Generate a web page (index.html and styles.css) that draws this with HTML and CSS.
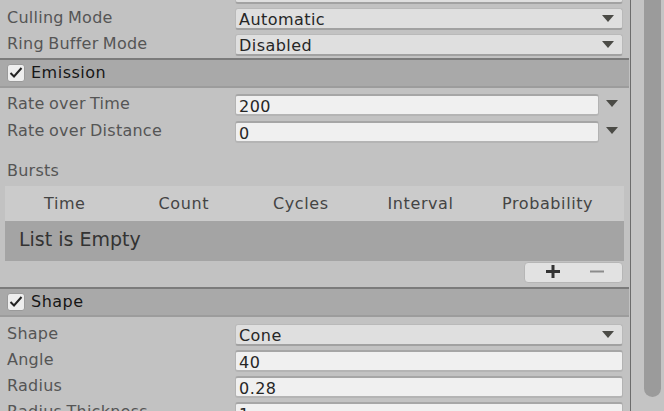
FILE: index.html
```html
<!DOCTYPE html>
<html>
<head>
<meta charset="utf-8">
<link rel="stylesheet" href="styles.css">
</head>
<body>
<div class="inspector">
  <div class="stub"></div>
  <div class="row">
    <div class="label">Culling Mode</div>
    <div class="dropdown"><span class="val">Automatic</span><span class="arrow"></span></div>
  </div>
  <div class="row">
    <div class="label">Ring Buffer Mode</div>
    <div class="dropdown"><span class="val">Disabled</span><span class="arrow"></span></div>
  </div>

  <div class="header">
    <span class="check"><svg width="18" height="18" viewBox="0 0 18 18"><polyline points="3.5,9 7,12.5 14.5,4" fill="none" stroke="#222" stroke-width="2"/></svg></span>
    <span class="htitle">Emission</span>
  </div>
  <div class="body emission">
    <div class="row trow">
      <div class="label">Rate over Time</div>
      <div class="field short"><span class="val">200</span></div>
      <span class="arrow ext"></span>
    </div>
    <div class="row trow">
      <div class="label">Rate over Distance</div>
      <div class="field short"><span class="val">0</span></div>
      <span class="arrow ext"></span>
    </div>
    <div class="row blabel">
      <div class="label">Bursts</div>
    </div>
    <div class="bursts">
      <div class="thead">
        <span>Time</span><span>Count</span><span>Cycles</span><span>Interval</span><span>Probability</span>
      </div>
      <div class="tempty">List is Empty</div>
      <div class="tfoot">
        <div class="btn">
          <svg width="97" height="19" viewBox="0 0 97 19"><path d="M21 8.5h14M28 2v13" stroke="#333" stroke-width="3"/><path d="M65 8.5h14" stroke="#8c8c8c" stroke-width="2"/></svg>
        </div>
      </div>
    </div>
  </div>

  <div class="header">
    <span class="check"><svg width="18" height="18" viewBox="0 0 18 18"><polyline points="3.5,9 7,12.5 14.5,4" fill="none" stroke="#222" stroke-width="2"/></svg></span>
    <span class="htitle">Shape</span>
  </div>
  <div class="body shape">
    <div class="row">
      <div class="label">Shape</div>
      <div class="dropdown"><span class="val">Cone</span><span class="arrow"></span></div>
    </div>
    <div class="row">
      <div class="label">Angle</div>
      <div class="field"><span class="val">40</span></div>
    </div>
    <div class="row">
      <div class="label">Radius</div>
      <div class="field"><span class="val">0.28</span></div>
    </div>
    <div class="row">
      <div class="label">Radius Thickness</div>
      <div class="field"><span class="val">1</span></div>
    </div>
  </div>
</div>
<div class="scroll"><div class="thumb"></div></div>
</body>
</html>
```
FILE: styles.css
```css
html, body {
  margin: 0;
  padding: 0;
}
body {
  width: 664px;
  height: 411px;
  overflow: hidden;
  display: flex;
  background: #c2c2c2;
  font-family: "DejaVu Sans", sans-serif;
  font-size: 16px;
}
.inspector {
  width: 630px;
  flex: none;
}
.scroll {
  width: 34px;
  flex: none;
  box-sizing: border-box;
  border-left: 1px solid #6c6c6c;
  background: #c4c4c4;
  padding-left: 13px;
}
.thumb {
  width: 17px;
  height: 397px;
  background: #9b9b9b;
  border-radius: 0 0 9px 9px;
}
.stub {
  margin-left: 235px;
  width: 388px;
  height: 4px;
  box-sizing: border-box;
  background: #dfdfdf;
  border: 1px solid #b8b8b8;
  border-top: none;
  border-bottom: 2px solid #a2a2a2;
  border-radius: 0 0 3px 3px;
  margin-bottom: 4px;
}
.row {
  display: flex;
  align-items: center;
  height: 22px;
  margin-bottom: 4px;
}
.label {
  width: 235px;
  flex: none;
  box-sizing: border-box;
  padding-left: 7px;
  padding-bottom: 2px;
  color: #555555;
  letter-spacing: 0.25px;
  word-spacing: -1px;
  white-space: nowrap;
  line-height: 20px;
}
.dropdown, .field {
  width: 388px;
  height: 22px;
  flex: none;
  box-sizing: border-box;
  display: flex;
  align-items: center;
  justify-content: space-between;
  padding: 2px 8px 0 3px;
  border-radius: 3px;
}
.dropdown {
  background: #dfdfdf;
  border: 1px solid #b9b9b9;
  border-bottom: 2px solid #a1a1a1;
}
.field {
  background: #f0f0f0;
  border: 1px solid #b3b3b3;
  border-top: 2px solid #a6a6a6;
  border-bottom: 2px solid #b4b4b4;
  padding-top: 2px;
}
.field.short {
  width: 364px;
}
.val {
  color: #262626;
  letter-spacing: 0.45px;
  white-space: nowrap;
}
.arrow {
  width: 0;
  height: 0;
  border-left: 6.5px solid transparent;
  border-right: 6.5px solid transparent;
  border-top: 7px solid #4b4b46;
  margin-top: -2px;
}
.arrow.ext {
  margin-left: 7px;
  margin-top: -4px;
}
.header {
  margin-top: -2px;
  width: 629px;
  height: 30px;
  box-sizing: border-box;
  border-top: 2px solid #7b7b7b;
  border-bottom: 2px solid #9c9c9c;
  background: #a9a9a9;
  display: flex;
  align-items: center;
  padding-left: 7px;
}
.check {
  width: 18px;
  height: 18px;
  box-sizing: border-box;
  border: 1px solid #9a9a9a;
  border-radius: 3px;
  background: #eeeeee;
  display: flex;
  align-items: center;
  justify-content: center;
}
.check svg {
  display: block;
  flex: none;
}
.htitle {
  margin-left: 6px;
  color: #161616;
  letter-spacing: 0.5px;
  padding-bottom: 1px;
}
.body.emission {
  padding-top: 6px;
}
.trow {
  margin-bottom: 5px;
}
.blabel {
  margin-top: 18px;
  margin-bottom: 3px;
}
.bursts {
  margin-left: 5px;
  width: 619px;
}
.thead {
  height: 35px;
  background: #cbcbcb;
  display: grid;
  grid-template-columns: repeat(5, 114.5px);
  padding-left: 39px;
  align-items: center;
  color: #444444;
  letter-spacing: 0.6px;
  box-sizing: border-box;
}
.tempty {
  height: 40px;
  box-sizing: border-box;
  background: #a4a4a4;
  padding: 0 0 4px 14px;
  display: flex;
  align-items: center;
  font-size: 19px;
  color: #333333;
}
.tfoot {
  display: flex;
  justify-content: flex-end;
  padding: 1px 1px 0 0;
  height: 28px;
  box-sizing: border-box;
}
.btn {
  width: 99px;
  height: 21px;
  box-sizing: border-box;
  background: #e2e2e2;
  border: 1px solid #b6b6b6;
  border-radius: 4px;
}
.btn svg {
  display: block;
}
.body.shape {
  padding-top: 7px;
}
```
